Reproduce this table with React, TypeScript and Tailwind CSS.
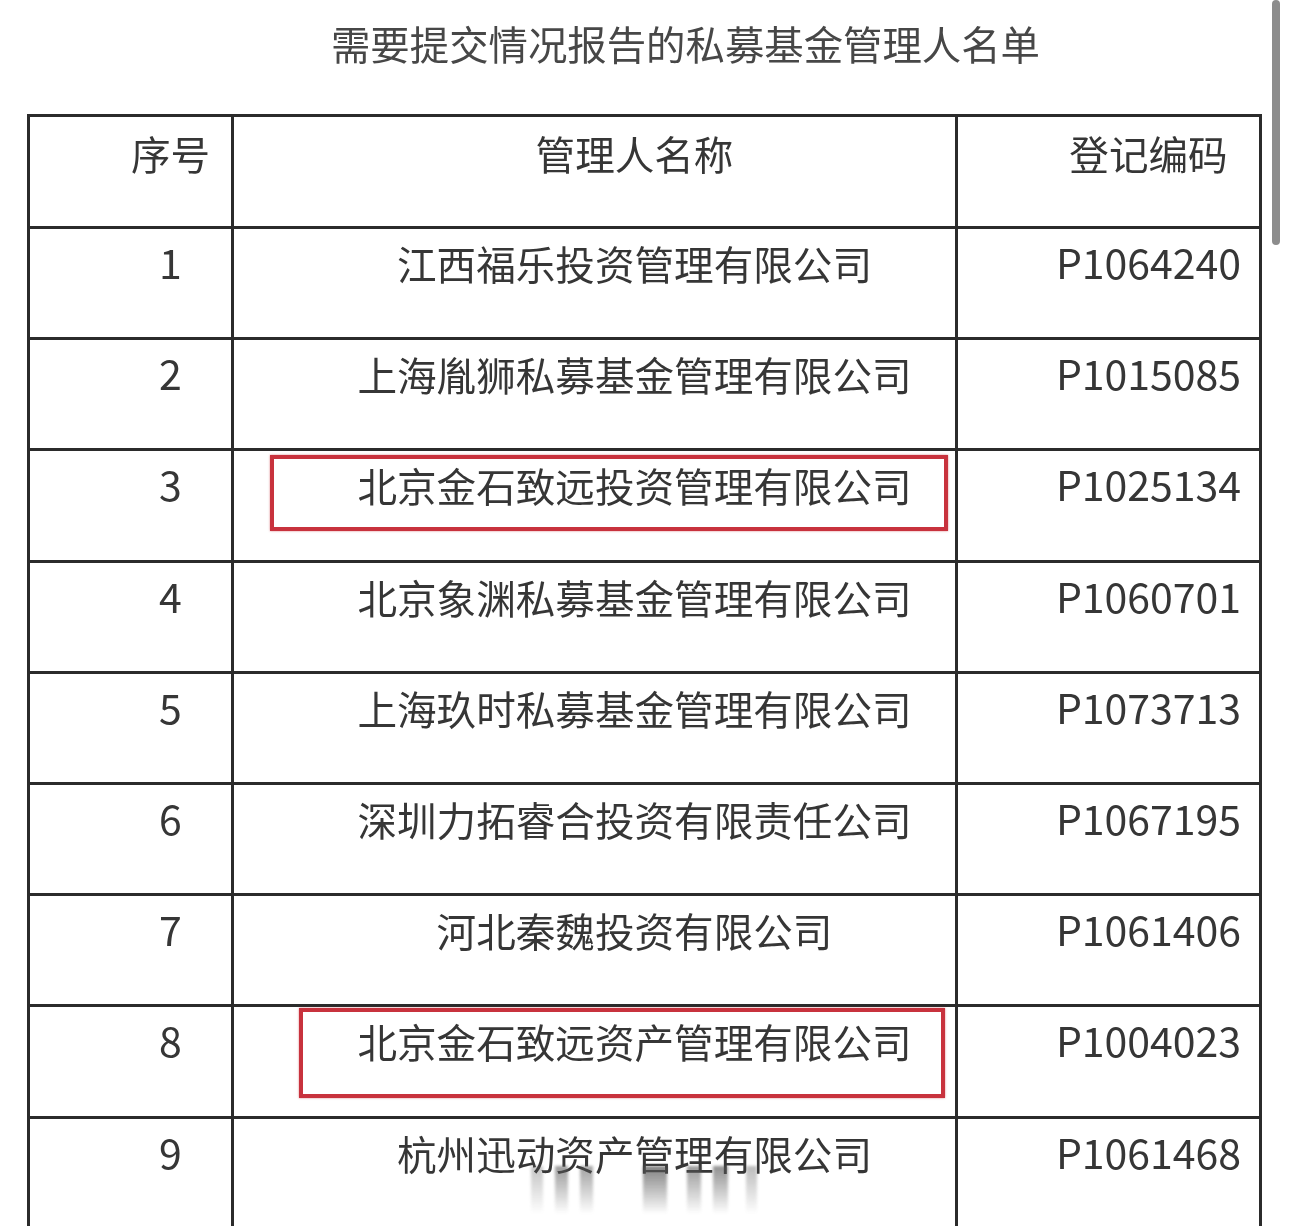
const rows = [
  { no: "1", name: "江西福乐投资管理有限公司", code: "P1064240" },
  { no: "2", name: "上海胤狮私募基金管理有限公司", code: "P1015085" },
  { no: "3", name: "北京金石致远投资管理有限公司", code: "P1025134", mark: "a" },
  { no: "4", name: "北京象渊私募基金管理有限公司", code: "P1060701" },
  { no: "5", name: "上海玖时私募基金管理有限公司", code: "P1073713" },
  { no: "6", name: "深圳力拓睿合投资有限责任公司", code: "P1067195" },
  { no: "7", name: "河北秦魏投资有限公司", code: "P1061406" },
  { no: "8", name: "北京金石致远资产管理有限公司", code: "P1004023", mark: "b" },
  { no: "9", name: "杭州迅动资产管理有限公司", code: "P1061468" },
];

const font = { fontFamily: '"Noto Sans CJK SC", "Noto Sans", sans-serif' };

// smeared marks under the last row (watermark left over from the screenshot)
const smears = [
  [531, 12, 0.35],
  [555, 13, 0.6],
  [580, 13, 0.55],
  [643, 24, 0.75],
  [687, 14, 0.6],
  [713, 15, 0.65],
  [746, 11, 0.4],
];

function Row({ r, last }: { r: (typeof rows)[number]; last: boolean }) {
  return (
    <div
      className={
        "grid grid-cols-[204px_724px_301px] h-[111.2px] " +
        (last ? "border-b-2 border-[#bdbdbd]" : "border-b-[3px] border-[#2b2b2b]")
      }
    >
      <div className="border-r-[3px] border-[#2b2b2b] pt-[12px] pl-[80px] text-center text-[41px] leading-[40px]">
        {r.no}
      </div>
      <div className="relative border-r-[3px] border-[#2b2b2b] pt-[14px] pl-[80px] text-center text-[39.6px] leading-[40px] whitespace-nowrap">
        {r.name}
        {r.mark === "a" && (
          <div className="absolute left-[36px] top-[4px] w-[678px] h-[76px] border-[4px] border-[#c8323d] shadow-[0_0_2px_rgba(200,50,61,0.6)]" />
        )}
        {r.mark === "b" && (
          <div className="absolute left-[65px] top-[1px] w-[646px] h-[90px] border-[4px] border-[#c8323d] shadow-[0_0_2px_rgba(200,50,61,0.6)]" />
        )}
      </div>
      <div className="pt-[12px] pl-[80px] text-center text-[41px] leading-[40px]">{r.code}</div>
    </div>
  );
}

export default function App() {
  return (
    <div className="relative w-[1289px] h-[1226px] overflow-hidden bg-white text-[#363636]" style={font}>
      <div className="blur-[0.35px]">
        <div className="pt-[23px] pl-[82px] text-center text-[39.4px] leading-[40px] text-[#474747]">
          需要提交情况报告的私募基金管理人名单
        </div>

        <div className="mt-[51px] ml-[27px] w-[1235px] border-t-[3px] border-l-[3px] border-r-[3px] border-[#2b2b2b]">
          <div className="grid grid-cols-[204px_724px_301px] h-[112px] border-b-[3px] border-[#2b2b2b] text-[39.6px] leading-[40px]">
            <div className="border-r-[3px] border-[#2b2b2b] pt-[16px] pl-[80px] text-center">序号</div>
            <div className="border-r-[3px] border-[#2b2b2b] pt-[16px] pl-[80px] text-center">管理人名称</div>
            <div className="pt-[16px] pl-[80px] text-center">登记编码</div>
          </div>
          {rows.map((r, i) => (
            <Row key={r.no} r={r} last={i === rows.length - 1} />
          ))}
        </div>
      </div>

      {smears.map(([x, w, o]) => (
        <div
          key={x}
          className="absolute top-[1166px] h-[48px] bg-linear-to-b from-[#555] to-transparent blur-[1.5px]"
          style={{ left: x, width: w, opacity: o }}
        />
      ))}

      <div className="absolute left-[1272px] top-0 w-[8px] h-[245px] rounded-full bg-[#8c8c8c]" />
    </div>
  );
}
